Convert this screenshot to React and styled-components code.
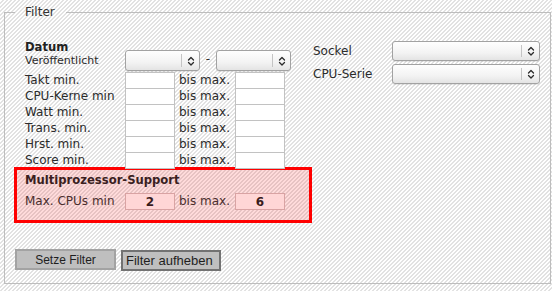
import React from 'react'
import styled, { createGlobalStyle } from 'styled-components'

const GlobalStyle = createGlobalStyle`
  html, body {
    margin: 0;
    padding: 0;
  }
  body {
    width: 552px;
    height: 291px;
    overflow: hidden;
    font-family: "DejaVu Sans", Verdana, sans-serif;
    font-size: 12px;
    color: #2b2b2b;
    background-color: #fff;
    background-image: repeating-linear-gradient(
      135deg,
      #ffffff 0,
      #ffffff 1.6px,
      #e2e2e2 1.6px,
      #e2e2e2 2.83px
    );
  }
`

const Fieldset = styled.fieldset`
  margin: 5px 1px 0 4px;
  padding: 20px 0 12px 9px;
  border: 1px solid #bdbdbd;
  min-width: 0;
`

const Legend = styled.legend`
  margin-left: 1px;
  padding: 0 11px 0 10px;
  line-height: 15px;
  font-size: 12px;
  color: #333;
`

const Top = styled.div`
  display: flex;
  align-items: flex-start;
`

const LeftCol = styled.div`
  width: 298px;
  padding-left: 11px;
  box-sizing: border-box;
`

const DatumRow = styled.div`
  display: flex;
  align-items: flex-start;
  height: 32px;
`

const DatumLabel = styled.div`
  width: 100px;
  flex: none;
`

const Title = styled.div`
  font-weight: bold;
  font-size: 11.6px;
  line-height: 14px;
  color: ${p => p.$tone || '#222'};
`

const Sub = styled.div`
  font-size: 11px;
  line-height: 13px;
`

const Dash = styled.span`
  width: 16px;
  text-align: center;
  margin-top: 12px;
  line-height: 15px;
`

const SelectBox = styled.div`
  position: relative;
  flex: none;
  width: ${p => p.$w}px;
  height: ${p => p.$h}px;
  margin-top: ${p => p.$top || 0}px;
  box-sizing: border-box;
  border: 1px solid #a2a2a2;
  border-radius: 3px;
  background: linear-gradient(#fefefe, #f3f3f3 60%, #e4e4e4);
  box-shadow: 0 1px 0 rgba(0, 0, 0, 0.08);

  select {
    appearance: none;
    width: 100%;
    height: 100%;
    border: none;
    background: transparent;
    font: inherit;
    padding: 0 4px;
    outline: none;
  }
`

const Arrow = styled.span`
  position: absolute;
  top: 3px;
  bottom: 3px;
  right: 0;
  width: 17px;
  border-left: 1px solid #c4c4c4;
  display: flex;
  align-items: center;
  justify-content: center;
  pointer-events: none;
`

const Rows = styled.div`
  display: flex;
  flex-direction: column;
`

const Row = styled.div`
  display: grid;
  grid-template-columns: 100px 50px 60px 50px;
  height: 16px;
  align-items: start;
  line-height: 16px;
  color: ${p => p.$tone || 'inherit'};
`

const Label = styled.span`
  white-space: nowrap;
`

const Bis = styled.span`
  padding-left: 4px;
  white-space: nowrap;
`

const NumInput = styled.input`
  box-sizing: border-box;
  width: 50px;
  height: 17px;
  margin: 0;
  padding: 0 2px;
  border: 1px solid ${p => (p.$hot ? '#d9a3a3' : '#c2c2c2')};
  background: ${p => (p.$hot ? '#ffd6d6' : '#fff')};
  font-family: "DejaVu Sans", sans-serif;
  font-size: 12px;
  font-weight: ${p => (p.$hot ? 'bold' : 'normal')};
  color: #3a1c1c;
  text-align: center;
  outline: none;
`

const RightCol = styled.div`
  margin-left: 1px;
  padding-top: 1px;
  display: flex;
  flex-direction: column;
  gap: 3px;
`

const RightRow = styled.div`
  display: flex;
  align-items: center;
`

const RightLabel = styled.span`
  width: 79px;
`

const MultiBox = styled.div`
  width: 298px;
  box-sizing: border-box;
  margin-top: -1px;
  padding: 3px 0 11px 8px;
  border: 3px solid #ff0000;
  background: rgba(255, 40, 40, 0.17);
  display: flex;
  flex-direction: column;
  gap: 5px;

  ${Title} {
    line-height: 15px;
  }
`

const Buttons = styled.div`
  display: flex;
  align-items: flex-start;
  gap: 5px;
  margin-top: 26px;
  padding-left: 1px;
`

const Button = styled.button`
  box-sizing: border-box;
  width: ${p => p.$w}px;
  height: 21px;
  margin: ${p => p.$down || 0}px 0 0 0;
  padding: 0;
  border: 2px solid ${p => p.$edge};
  background: #bfbfbf;
  font-family: "Liberation Sans", Arial, sans-serif;
  font-size: ${p => p.$size}px;
  color: #1e1e1e;
  text-align: ${p => p.$align || 'center'};
  padding-left: ${p => p.$pl || 0}px;
`

function UpDown() {
  return (
    <svg width="8" height="12" viewBox="0 0 8 12" fill="none">
      <path d="M1.5 5 L4 2.5 L6.5 5" stroke="#2a2a2a" strokeWidth="1.3" strokeLinecap="round" strokeLinejoin="round" />
      <path d="M1.5 7.5 L4 10 L6.5 7.5" stroke="#2a2a2a" strokeWidth="1.3" strokeLinecap="round" strokeLinejoin="round" />
    </svg>
  )
}

function Select({ w, h, top }) {
  return (
    <SelectBox $w={w} $h={h} $top={top}>
      <select defaultValue="">
        <option value=""></option>
      </select>
      <Arrow>
        <UpDown />
      </Arrow>
    </SelectBox>
  )
}

const ranges = ['Takt min.', 'CPU-Kerne min', 'Watt min.', 'Trans. min.', 'Hrst. min.', 'Score min.']

export default function App() {
  return (
    <>
      <GlobalStyle />
      <form onSubmit={e => e.preventDefault()}>
        <Fieldset>
          <Legend>Filter</Legend>
          <Top>
            <LeftCol>
              <DatumRow>
                <DatumLabel>
                  <Title>Datum</Title>
                  <Sub>Veröffentlicht</Sub>
                </DatumLabel>
                <Select w={75} h={21} top={10} />
                <Dash>-</Dash>
                <Select w={75} h={21} top={10} />
              </DatumRow>
              <Rows>
                {ranges.map(r => (
                  <Row key={r}>
                    <Label>{r}</Label>
                    <NumInput />
                    <Bis>bis max.</Bis>
                    <NumInput />
                  </Row>
                ))}
              </Rows>
            </LeftCol>
            <RightCol>
              <RightRow>
                <RightLabel>Sockel</RightLabel>
                <Select w={148} h={20} />
              </RightRow>
              <RightRow>
                <RightLabel>CPU-Serie</RightLabel>
                <Select w={148} h={20} />
              </RightRow>
            </RightCol>
          </Top>
          <MultiBox>
            <Title $tone="#3b1f1f">Multiprozessor-Support</Title>
            <Row $tone="#4a2e2e">
              <Label>Max. CPUs min</Label>
              <NumInput $hot defaultValue="2" />
              <Bis>bis max.</Bis>
              <NumInput $hot defaultValue="6" />
            </Row>
          </MultiBox>
          <Buttons>
            <Button type="submit" $w={101} $size={12} $edge="#a3a3a3">Setze Filter</Button>
            <Button type="button" $w={100} $size={13} $edge="#727272" $down={1} $align="left" $pl={3}>Filter aufheben</Button>
          </Buttons>
        </Fieldset>
      </form>
    </>
  )
}
